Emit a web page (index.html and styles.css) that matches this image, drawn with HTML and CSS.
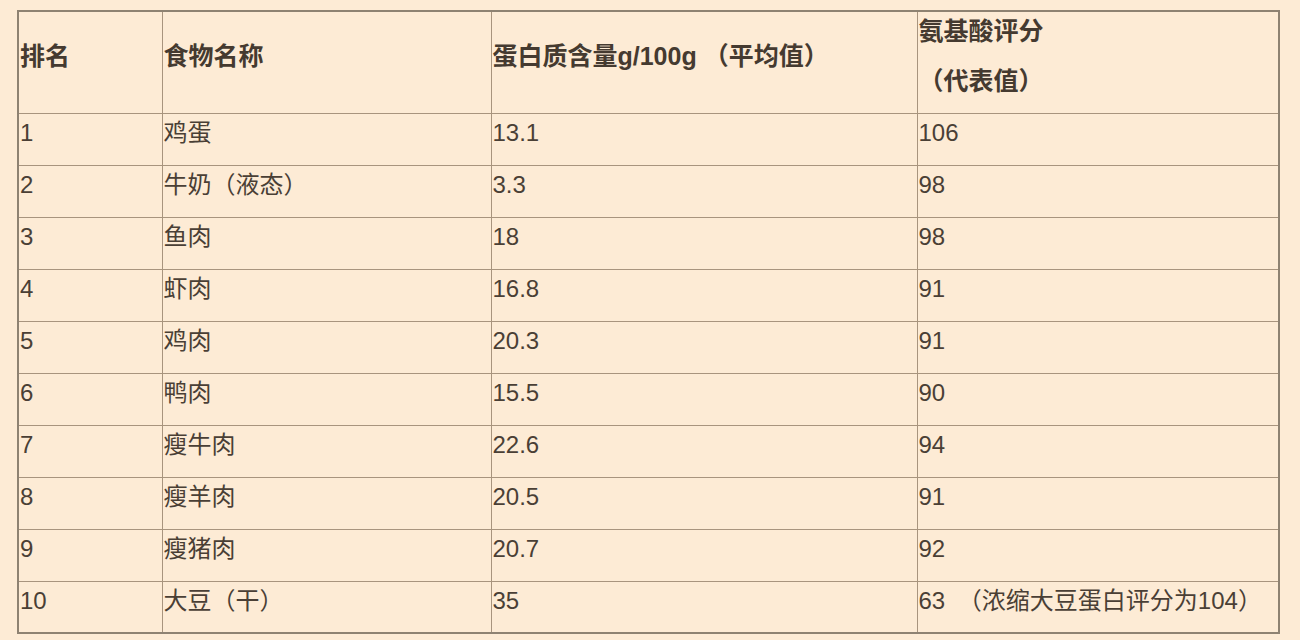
FILE: index.html
```html
<!DOCTYPE html>
<html lang="zh">
<head>
<meta charset="utf-8">
<link rel="stylesheet" href="styles.css">
</head>
<body>
<table class="tbl">
  <colgroup>
    <col class="c1"><col class="c2"><col class="c3"><col class="c4">
  </colgroup>
  <thead>
    <tr>
      <th>排名</th>
      <th>食物名称</th>
      <th>蛋白质含量g/100g （平均值）</th>
      <th class="two"><span class="l1">氨基酸评分</span><span class="l2">（代表值）</span></th>
    </tr>
  </thead>
  <tbody>
    <tr><td>1</td><td>鸡蛋</td><td>13.1</td><td>106</td></tr>
    <tr><td>2</td><td>牛奶（液态）</td><td>3.3</td><td>98</td></tr>
    <tr><td>3</td><td>鱼肉</td><td>18</td><td>98</td></tr>
    <tr><td>4</td><td>虾肉</td><td>16.8</td><td>91</td></tr>
    <tr><td>5</td><td>鸡肉</td><td>20.3</td><td>91</td></tr>
    <tr><td>6</td><td>鸭肉</td><td>15.5</td><td>90</td></tr>
    <tr><td>7</td><td>瘦牛肉</td><td>22.6</td><td>94</td></tr>
    <tr><td>8</td><td>瘦羊肉</td><td>20.5</td><td>91</td></tr>
    <tr><td>9</td><td>瘦猪肉</td><td>20.7</td><td>92</td></tr>
    <tr><td>10</td><td>大豆（干）</td><td>35</td><td class="note">63 （浓缩大豆蛋白评分为104）</td></tr>
  </tbody>
</table>
</body>
</html>
```
FILE: styles.css
```css
html, body {
  margin: 0;
  background: #fdebd5;
}
body {
  height: 640px;
  overflow: hidden;
  font-family: "Liberation Sans", "Noto Sans CJK SC", sans-serif;
  color: #4a3f35;
}
.tbl {
  border-collapse: collapse;
  margin: 10px 0 0 17px;
  width: 1261px;
  table-layout: fixed;
  border: 2px solid #8e8272;
}
.c1 { width: 144px; }
.c2 { width: 329px; }
.c3 { width: 426px; }
.c4 { width: 362px; }
.tbl th, .tbl td {
  border: 1px solid #a8947e;
  padding: 0 0 0 1px;
  text-align: left;
  font-size: 24px;
  line-height: 28px;
  white-space: nowrap;
}
.tbl th {
  height: 102px;
  font-size: 25px;
  font-weight: bold;
  vertical-align: middle;
  padding-bottom: 12px;
  box-sizing: border-box;
  color: #453a30;
}
.tbl th.two .l1, .tbl th.two .l2 {
  display: block;
}
.tbl th.two .l2 {
  margin-top: 22px;
}
.tbl td {
  height: 52px;
  vertical-align: top;
  padding-top: 5px;
  box-sizing: border-box;
}
.tbl td.note {
  word-spacing: 6px;
}
```
